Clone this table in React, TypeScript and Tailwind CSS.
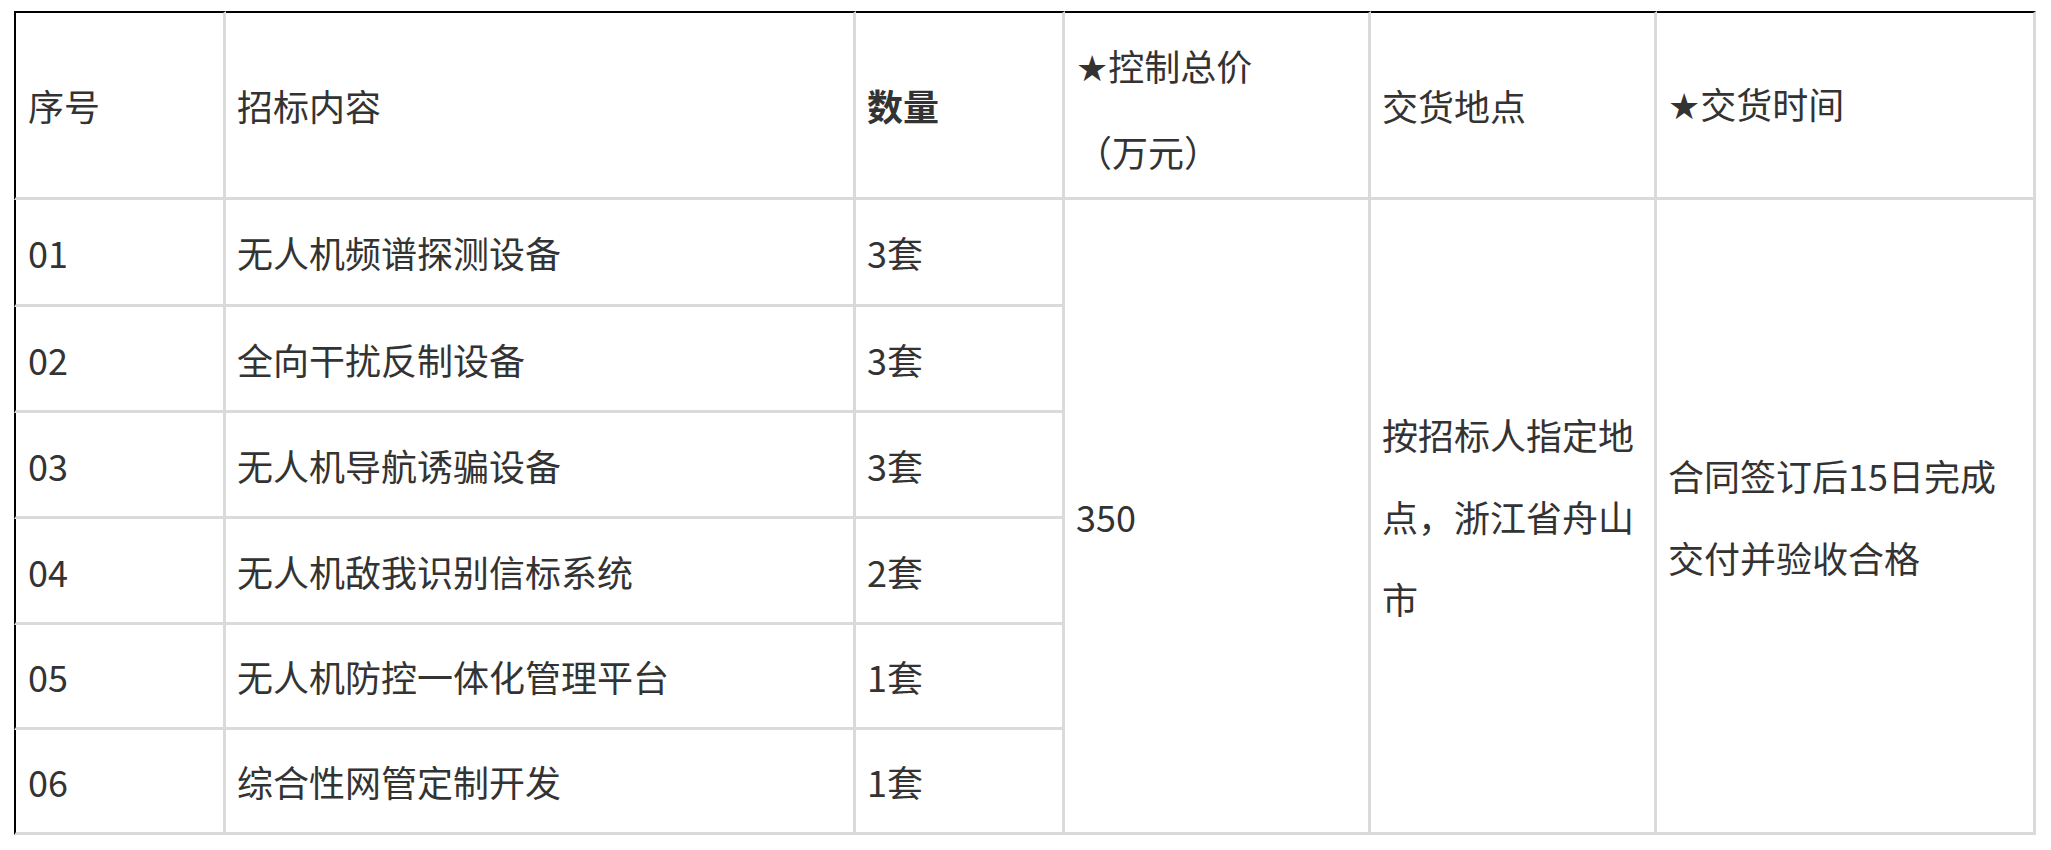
import React from "react";

const rows = [
  { no: "01", item: "无人机频谱探测设备", qty: "3套" },
  { no: "02", item: "全向干扰反制设备", qty: "3套" },
  { no: "03", item: "无人机导航诱骗设备", qty: "3套" },
  { no: "04", item: "无人机敌我识别信标系统", qty: "2套" },
  { no: "05", item: "无人机防控一体化管理平台", qty: "1套" },
  { no: "06", item: "综合性网管定制开发", qty: "1套" },
];

// every cell draws its own right/bottom rule
const cell =
  "flex items-center whitespace-nowrap pl-[11px] border-r-[3px] border-b-[3px] border-r-[#dadada] border-b-[#dadada]";
const head = "border-t-2 border-t-black";
const first = "border-l-2 border-l-black pl-[12px]";
const last = "border-r-2";

function Star() {
  return <span className="font-['DejaVu_Sans',sans-serif] text-[36px]">★</span>;
}

export default function App() {
  return (
    <div className="min-h-screen bg-white pt-[11px] pl-[14px] text-[36px] text-[#333] font-['Noto_Sans_CJK_SC',sans-serif]">
      <div className="grid grid-cols-[212px_630px_209px_306px_286px_379px] grid-rows-[189px_107px_106px_106px_106px_105px_105px]">
        {/* header */}
        <div className={`${cell} ${head} ${first}`}>序号</div>
        <div className={`${cell} ${head}`}>招标内容</div>
        <div className={`${cell} ${head} font-bold`}>数量</div>
        <div className={`${cell} ${head} pt-[6px] leading-[82px]`}>
          <div>
            <Star />控制总价
            <br />
            （万元）
          </div>
        </div>
        <div className={`${cell} ${head}`}>交货地点</div>
        <div className={`${cell} ${head} ${last}`}>
          <span>
            <Star />交货时间
          </span>
        </div>

        {/* merged columns */}
        <div className={`${cell} col-start-4 row-start-2 row-span-6`}>350</div>
        <div className={`${cell} col-start-5 row-start-2 row-span-6 leading-[82px]`}>
          <div>
            按招标人指定地
            <br />
            点，浙江省舟山
            <br />市
          </div>
        </div>
        <div className={`${cell} ${last} col-start-6 row-start-2 row-span-6 leading-[82px]`}>
          <div>
            合同签订后15日完成
            <br />
            交付并验收合格
          </div>
        </div>

        {/* item rows */}
        {rows.map((r) => (
          <React.Fragment key={r.no}>
            <div className={`${cell} ${first} col-start-1`}>{r.no}</div>
            <div className={`${cell} col-start-2`}>{r.item}</div>
            <div className={`${cell} col-start-3`}>{r.qty}</div>
          </React.Fragment>
        ))}
      </div>
    </div>
  );
}
